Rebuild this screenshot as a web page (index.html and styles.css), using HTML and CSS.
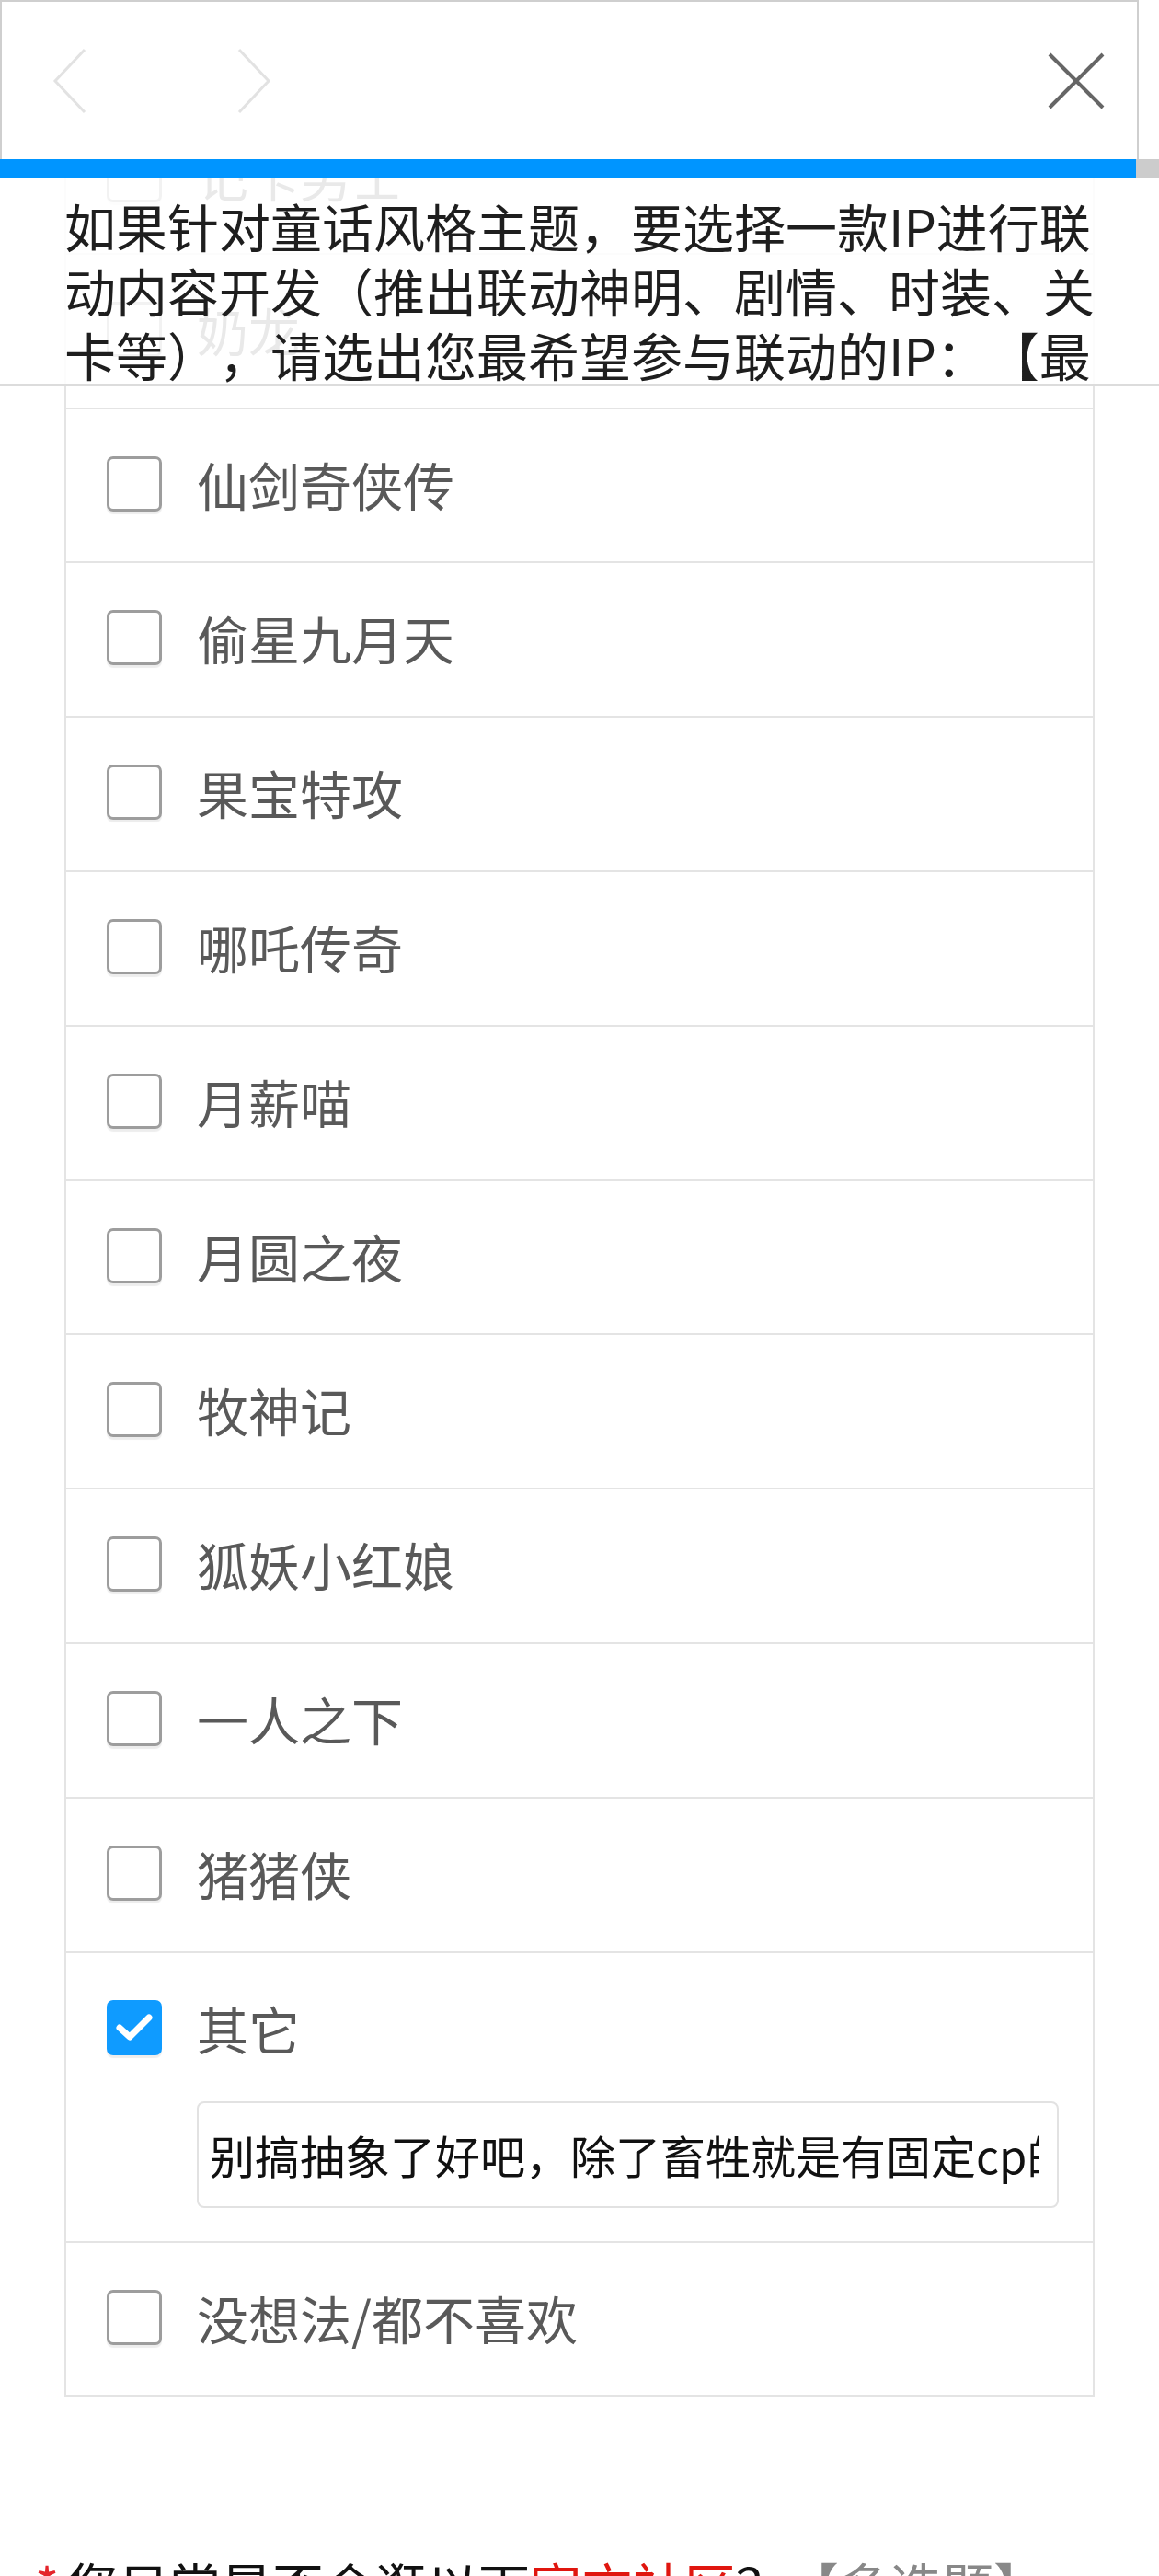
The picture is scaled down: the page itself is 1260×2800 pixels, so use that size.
FILE: index.html
```html
<!doctype html>
<html lang="zh-CN">
<head>
    <meta charset="UTF-8">
    <meta name="viewport" content="width=device-width, initial-scale=1.0">
    <title>问卷</title>
    <link rel="stylesheet" href="styles.css">
</head>
<body>

<header class="topbar">
    <div class="topbar-nav">
        <button class="nav-btn" aria-label="上一题">
            <svg width="38" height="72" viewBox="0 0 38 72"><polyline points="35,2 3,36 35,70" fill="none" stroke="#e2e2e2" stroke-width="3"/></svg>
        </button>
        <button class="nav-btn" aria-label="下一题">
            <svg width="38" height="72" viewBox="0 0 38 72"><polyline points="3,2 35,36 3,70" fill="none" stroke="#e2e2e2" stroke-width="3"/></svg>
        </button>
    </div>
    <button class="close-btn" aria-label="关闭">
        <svg width="64" height="62" viewBox="0 0 64 62"><path d="M3 2 L61 60 M61 2 L3 60" fill="none" stroke="#666" stroke-width="4"/></svg>
    </button>
</header>

<div class="progress"><div class="progress-fill" style="width: 1235px"></div></div>

<div class="question-head">
    <div class="question-head-text">如果针对童话风格主题，要选择一款IP进行联动内容开发（推出联动神明、剧情、时装、关卡等），请选出您最希望参与联动的IP：【最多选3项】【多选题】</div>
</div>

<main class="survey">
    <section class="question">
        <ul class="options">
            <li class="option"><label class="option-main"><span class="check"></span><span class="option-text">记卡男士</span></label></li>
            <li class="option"><label class="option-main"><span class="check"></span><span class="option-text">奶龙</span></label></li>
            <li class="option"><label class="option-main"><span class="check"></span><span class="option-text">仙剑奇侠传</span></label></li>
            <li class="option"><label class="option-main"><span class="check"></span><span class="option-text">偷星九月天</span></label></li>
            <li class="option"><label class="option-main"><span class="check"></span><span class="option-text">果宝特攻</span></label></li>
            <li class="option"><label class="option-main"><span class="check"></span><span class="option-text">哪吒传奇</span></label></li>
            <li class="option"><label class="option-main"><span class="check"></span><span class="option-text">月薪喵</span></label></li>
            <li class="option"><label class="option-main"><span class="check"></span><span class="option-text">月圆之夜</span></label></li>
            <li class="option"><label class="option-main"><span class="check"></span><span class="option-text">牧神记</span></label></li>
            <li class="option"><label class="option-main"><span class="check"></span><span class="option-text">狐妖小红娘</span></label></li>
            <li class="option"><label class="option-main"><span class="check"></span><span class="option-text">一人之下</span></label></li>
            <li class="option"><label class="option-main"><span class="check"></span><span class="option-text">猪猪侠</span></label></li>
            <li class="option option-other">
                <label class="option-main">
                    <span class="check is-checked">
                        <svg width="60" height="60" viewBox="0 0 60 60"><polyline points="14,30 25,40 46,19" fill="none" stroke="#fff" stroke-width="7" stroke-linecap="round" stroke-linejoin="round"/></svg>
                    </span>
                    <span class="option-text">其它</span>
                </label>
                <div class="other-field">
                    <input class="other-input" type="text" value="别搞抽象了好吧，除了畜牲就是有固定cp的">
                </div>
            </li>
            <li class="option"><label class="option-main"><span class="check"></span><span class="option-text">没想法/都不喜欢</span></label></li>
        </ul>
    </section>

    <section class="question">
        <h2 class="question-title"><span class="required">*</span>您日常是否会逛以下<span class="hl">官方社区</span>？<span class="tag">【多选题】</span></h2>
    </section>
</main>

</body>
</html>
```

FILE: styles.css
```css
body {
    margin: 0;
    background: #fff;
    font-family: "Noto Sans CJK SC", "Noto Sans", sans-serif;
    text-spacing-trim: space-all;
}

button {
    padding: 0;
    background: transparent;
    border: none;
    outline: none;
    cursor: pointer;
}

/* fixed bars on top of the scrolled list */
.topbar {
    position: fixed;
    top: 0;
    left: 0;
    z-index: 3;
    box-sizing: border-box;
    width: 1238px;
    height: 173px;
    display: flex;
    align-items: center;
    justify-content: space-between;
    padding: 0 55px 0 55px;
    background: #fff;
    border: 2px solid #cfcfcf;
    border-bottom: none;
}

.topbar-nav {
    display: flex;
    gap: 162px;
}

.nav-btn,
.close-btn {
    display: block;
    line-height: 0;
}

.close-btn {
    margin-right: -21px;
}

.progress {
    position: fixed;
    top: 173px;
    left: 0;
    z-index: 3;
    width: 1260px;
    height: 21px;
    background: #cccccc;
}

.progress-fill {
    height: 100%;
    background: #0095ff;
}

.question-head {
    position: fixed;
    top: 194px;
    left: 0;
    z-index: 2;
    box-sizing: border-box;
    width: 1260px;
    height: 226px;
    padding: 16px 68px 0 70px;
    overflow: hidden;
    background: rgba(255, 255, 255, 0.87);
    border-bottom: 3px solid #dcdcdc;
}

.question-head-text {
    height: 207px;
    overflow: hidden;
    font-size: 56px;
    line-height: 70px;
    color: #1e1e1e;
}

/* list */
.survey {
    padding-top: 109px;
}

.options {
    list-style: none;
    margin: 0 70px;
    padding: 0;
    border-left: 2px solid #e4e4e4;
    border-right: 2px solid #e4e4e4;
}

.option {
    box-sizing: border-box;
    height: 167.8px;
    padding: 51px 37px 0 44px;
    border-bottom: 2px solid #e4e4e4;
}

.option-main {
    display: flex;
    align-items: center;
    gap: 38px;
    height: 60px;
}

.check {
    box-sizing: border-box;
    flex: none;
    width: 60px;
    height: 60px;
    border: 3px solid #9d9d9d;
    border-radius: 7px;
    background: #fff;
    box-shadow: 0 3px 1px rgba(0, 0, 0, 0.07);
}

.check.is-checked {
    border: none;
    background: #0f9bff;
    line-height: 0;
}

.option-text {
    font-size: 56px;
    line-height: 60px;
    color: #595959;
}

.option-other {
    height: auto;
    padding-bottom: 36px;
}

.other-field {
    margin-top: 50px;
    padding-left: 98px;
}

.other-input {
    display: block;
    box-sizing: border-box;
    width: 100%;
    height: 116px;
    padding: 0 20px 0 12px;
    border: 2px solid #e2e2e2;
    border-radius: 8px;
    outline: none;
    font-family: "Noto Sans CJK SC", "Noto Sans", sans-serif;
    font-size: 49px;
    color: #111;
    background: #fff;
}

.question-title {
    margin: 169px 0 0;
    padding: 0 68px 0 38px;
    font-size: 56px;
    font-weight: normal;
    line-height: 70px;
    color: #111;
}

.required {
    display: inline-block;
    width: 34px;
    color: #e4242b;
}

.hl {
    color: #e0160f;
}

.tag {
    color: #888;
}
```
